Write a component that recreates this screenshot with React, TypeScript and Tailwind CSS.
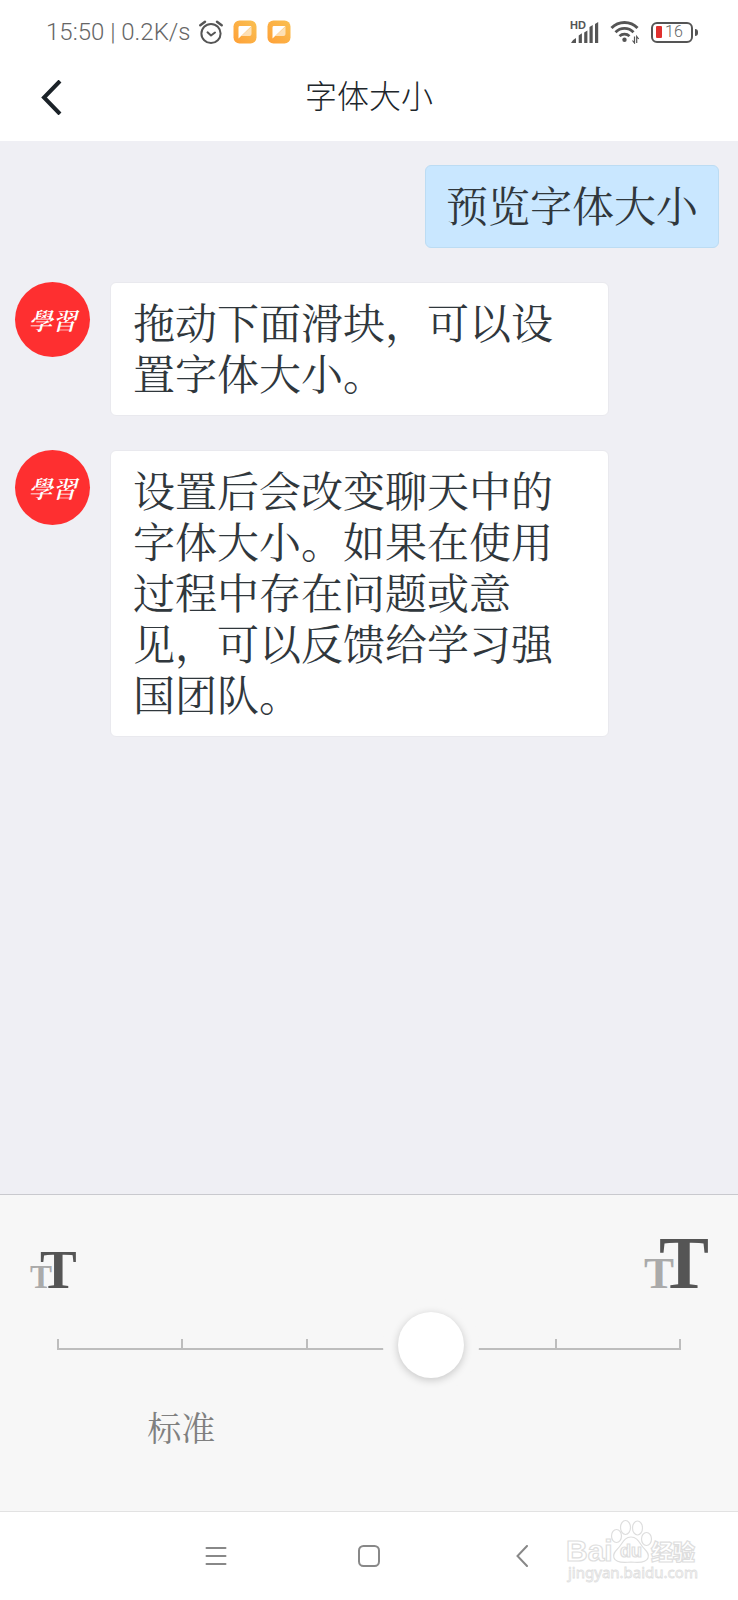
import { useState } from "react";

const messages = [
  "拖动下面滑块，可以设置字体大小。",
  "设置后会改变聊天中的字体大小。如果在使用过程中存在问题或意见，可以反馈给学习强国团队。",
];

function AlarmIcon() {
  return (
    <svg width="24" height="26" viewBox="0 0 24 26" fill="none" stroke="#555" strokeLinecap="round" aria-hidden="true">
      <circle cx="12" cy="14.500" r="9.600" strokeWidth="2" />
      <path d="M8.500 13.300 12 16.500l4-3" strokeWidth="2" strokeLinejoin="round" />
      <path d="M1.300 6.200 6 2.700M22.700 6.200 18 2.700" strokeWidth="2.400" />
    </svg>
  );
}

function NoteIcon() {
  return (
    <svg width="24" height="24" viewBox="0 0 24 24" aria-hidden="true">
      <defs>
        <linearGradient id="note" x1="1" y1="0" x2="0" y2="1">
          <stop offset="0" stopColor="#f9c052" />
          <stop offset="1" stopColor="#ffa037" />
        </linearGradient>
      </defs>
      <rect x="0.5" y="0.5" width="23" height="23" rx="6" fill="url(#note)" />
      <path d="M6.500 6h12L5.500 18.500v-11a1.500 1.500 0 0 1 1-1.500z" fill="#fff" />
      <path d="M18.500 6.500v7.500a2 2 0 0 1-2 2H8.200z" fill="#fff" fillOpacity="0.6" />
    </svg>
  );
}

function SignalIcon() {
  return (
    <svg width="29" height="23" viewBox="0 0 29 23" className="overflow-visible" fill="#555" aria-hidden="true">
      <text x="0" y="8" fontSize="11" fontWeight="700" fontFamily="Liberation Sans, sans-serif">HD</text>
      <path d="M1 22q1-3 5-5v5z" />
      <path d="M8.700 14.500l3.200-2.200V22H8.700zM14.200 11.500l3.200-2V22h-3.200zM19.500 6l3.200-2v18h-3.200zM25 3l3.200-2v21h-3.200z" />
    </svg>
  );
}

function WifiIcon() {
  return (
    <svg width="30" height="24" viewBox="0 0 30 24" fill="none" stroke="#555" aria-hidden="true">
      <path d="M1.500 8a18 18 0 0 1 26 0" strokeWidth="3" />
      <path d="M5.500 12.200a12.500 12.500 0 0 1 18 0" strokeWidth="2.800" />
      <path d="M9.500 16.200a7 7 0 0 1 10 0" strokeWidth="2.600" />
      <circle cx="14.500" cy="19.800" r="2.200" fill="#555" stroke="none" />
      <path d="M24.500 16.500v6.500l-2-2.500M26.700 23v-6.500l2 2.500" strokeWidth="1.200" />
    </svg>
  );
}

function Battery() {
  return (
    <div className="flex items-center gap-0.5">
      <div className="flex h-[21px] w-[42px] items-center gap-[3px] rounded-md border-2 border-[#555] pl-[3px]">
        <span className="h-3 w-[6px] rounded-[1px] bg-[#e0302e]" />
        <span className="font-[Roboto] text-base leading-none font-light text-[#666]">16</span>
      </div>
      <span className="h-[7px] w-[3px] rounded-r bg-[#555]" />
    </div>
  );
}

function SmallLettersIcon() {
  return (
    <svg width="50" height="52" viewBox="0 0 50 52" className="overflow-visible" fontFamily="Liberation Serif, serif" fontWeight="700" aria-hidden="true">
      <text x="0" y="51" fontSize="33" fill="#aaa">T</text>
      <text x="10" y="51" fontSize="55" fill="#555" stroke="#f7f7f7" strokeWidth="2" paintOrder="stroke">T</text>
    </svg>
  );
}

function LargeLettersIcon() {
  return (
    <svg width="64" height="52" viewBox="0 0 64 52" className="overflow-visible" fontFamily="Liberation Serif, serif" fontWeight="700" aria-hidden="true">
      <text x="0" y="51" fontSize="45" fill="#aaa">T</text>
      <text x="15" y="51" fontSize="75" fill="#555" stroke="#f7f7f7" strokeWidth="3" paintOrder="stroke">T</text>
    </svg>
  );
}

function Watermark() {
  return (
    <svg
      className="pointer-events-none absolute right-9 bottom-3 overflow-visible"
      width="136"
      height="68"
      viewBox="0 0 136 68"
      fill="#fff"
      stroke="#dedede"
      strokeWidth="1.200"
      fontFamily="Liberation Sans, Noto Sans CJK SC, sans-serif"
      aria-hidden="true"
    >
      <text x="0" y="41" fontSize="30" fontWeight="700">Bai</text>
      <ellipse cx="50.500" cy="16" rx="5" ry="6.500" />
      <ellipse cx="59.500" cy="7.500" rx="5" ry="7" />
      <ellipse cx="71.500" cy="8" rx="5" ry="7" />
      <ellipse cx="80.500" cy="19" rx="5" ry="6.500" />
      <path d="M65 17c6 0 8 5 11 9s8 7 6 12-9 5-17 4c-8 1-15 1-17-4s3-8 6-12 5-9 11-9z" />
      <text x="54" y="37" fontSize="18" fontWeight="700">du</text>
      <text x="85" y="40" fontSize="22" fontWeight="900">经验</text>
      <text x="2" y="58" fontSize="15" strokeWidth="0.800" fontFamily="Noto Sans, sans-serif">jingyan.baidu.com</text>
    </svg>
  );
}

function Avatar() {
  return (
    <div className="flex size-[75px] shrink-0 items-center justify-center rounded-full bg-[#fe2f30] font-['Noto_Serif_CJK_TC','Noto_Sans_CJK_TC',serif] text-2xl font-semibold text-white italic">
      學習
    </div>
  );
}

const bubble = "rounded-md border pt-[13px] pb-[17px] text-[42px] leading-[51px] text-[#30373c]";

export default function App() {
  const [size, setSize] = useState(3);
  return (
    <div
      lang="zh-CN"
      className="flex min-h-screen flex-col bg-[#efeff4] font-['Noto_Serif_CJK_SC','Noto_Sans_CJK_SC',serif]"
    >
      <header className="bg-white">
        <div className="flex h-16 items-center justify-between pr-10 pl-[46px]">
          <div className="flex items-center">
            <span className="mr-2 font-[Roboto] text-[24px] font-light text-[#666]">15:50 | 0.2K/s</span>
            <AlarmIcon />
            <span className="ml-[10px] flex gap-[10px]">
              <NoteIcon />
              <NoteIcon />
            </span>
          </div>
          <div className="flex items-center gap-[11px]">
            <SignalIcon />
            <WifiIcon />
            <Battery />
          </div>
        </div>
        <div className="grid h-[77px] grid-cols-[1fr_auto_1fr] items-start">
          <button type="button" aria-label="返回" className="ml-10 w-6 pt-4">
            <svg width="22" height="35" viewBox="0 0 22 35" fill="none" stroke="#1b2228" strokeWidth="4" aria-hidden="true">
              <path d="M20 1 4 17.500 20 34" />
            </svg>
          </button>
          <h1 className="pt-[6px] font-['Noto_Sans_CJK_SC',sans-serif] text-[32px] leading-[48px] font-light text-[#20262b]">
            字体大小
          </h1>
        </div>
      </header>

      <main className="flex flex-1 flex-col gap-[34px] pt-6 pr-[19px] pl-[15px]">
        <p className={`${bubble} self-end border-[#bcdcf3] bg-[#c9e7ff] px-5`}>预览字体大小</p>
        {messages.map((text) => (
          <div key={text} className="flex items-start gap-5 pr-[110px]">
            <Avatar />
            <p className={`${bubble} flex-1 border-[#e9e9ee] bg-white px-[22px]`}>{text}</p>
          </div>
        ))}
      </main>

      <section className="border-t border-[#c9c9ce] bg-[#f7f7f7] pt-[42px] pb-[60px]">
        <div className="flex items-end justify-between px-[30px]">
          <SmallLettersIcon />
          <LargeLettersIcon />
        </div>
        <div className="mt-4 grid items-center">
          <div className="col-start-1 row-start-1 mx-[57px] mb-0.5 flex h-[11px] border-x-2 border-b-2 border-[#bdbdbd]">
            <span className="flex-1 border-r-2 border-[#bdbdbd]" />
            <span className="flex-1 border-r-2 border-[#bdbdbd]" />
            <span className="flex-1 border-r-2 border-[#bdbdbd]" />
            <span className="flex-1 border-r-2 border-[#bdbdbd]" />
            <span className="flex-1" />
          </div>
          <input
            type="range"
            min={0}
            max={5}
            value={size}
            onChange={(e) => setSize(Number(e.target.value))}
            aria-label="字体大小"
            className="z-10 col-start-1 row-start-1 mx-6 h-20 appearance-none bg-transparent [&::-webkit-slider-thumb]:size-[66px] [&::-webkit-slider-thumb]:appearance-none [&::-webkit-slider-thumb]:rounded-full [&::-webkit-slider-thumb]:bg-white [&::-webkit-slider-thumb]:shadow-[0_2px_8px_rgba(0,0,0,0.2),0_0_0_15px_#f7f7f7]"
          />
        </div>
        <div className="mx-[56px] mt-[18px] grid grid-cols-5">
          <span className="col-span-2 text-center text-[34px] leading-[48px] text-[#808080]">标准</span>
        </div>
      </section>

      <nav className="relative flex h-[89px] items-center justify-center border-t border-[#e2e2e2] bg-white text-[#888]">
        <button type="button" aria-label="菜单" className="flex w-[153px] justify-center">
          <svg width="22" height="22" viewBox="0 0 22 22" stroke="currentColor" strokeWidth="2" strokeLinecap="round" aria-hidden="true">
            <path d="M1.500 3h19M1.500 11h19M1.500 19h19" />
          </svg>
        </button>
        <button type="button" aria-label="主页" className="flex w-[153px] justify-center">
          <svg width="22" height="22" viewBox="0 0 22 22" fill="none" stroke="currentColor" strokeWidth="2" aria-hidden="true">
            <rect x="1" y="1" width="20" height="20" rx="4.500" />
          </svg>
        </button>
        <button type="button" aria-label="后退" className="flex w-[153px] justify-center">
          <svg width="12" height="22" viewBox="0 0 12 22" fill="none" stroke="currentColor" strokeWidth="2" strokeLinecap="round" aria-hidden="true">
            <path d="M11 1 1.500 11 11 21" />
          </svg>
        </button>
        <Watermark />
      </nav>
    </div>
  );
}
